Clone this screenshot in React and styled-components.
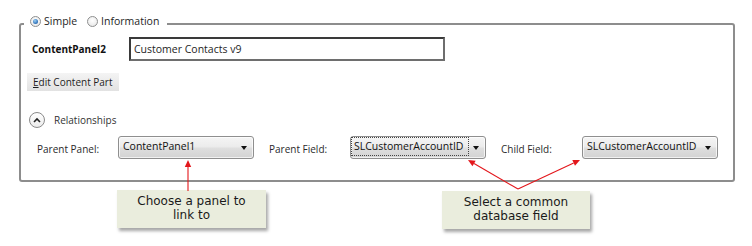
import React from "react";
import styled, { createGlobalStyle } from "styled-components";

const Global = createGlobalStyle`
  html, body { margin: 0; padding: 0; background: #fff; }
  body {
    font-family: "Open Sans", "Segoe UI", sans-serif;
    font-size: 10px;
    color: #1e1e1e;
  }
`;

const Page = styled.div`
  position: relative;
  width: 752px;
  height: 246px;
  box-sizing: border-box;
  padding-top: 13px;
  overflow: hidden;
`;

const Group = styled.fieldset`
  margin: 0 17px 0 19px;
  padding: 2px 0 21px 6px;
  border: 2px solid #8d8d8d;
  border-radius: 3px;
  min-width: 0;
`;

const Legend = styled.legend`
  margin-left: -3px;
  padding: 0 8px 6px 6px;
  display: flex;
  align-items: center;
  height: 16px;
  line-height: 16px;
  font-size: 10.5px;
`;

const RadioOption = styled.label`
  display: inline-flex;
  align-items: center;
  gap: 3px;
  margin-right: ${(p) => p.$gap || 0}px;
`;

const RadioDot = styled.span`
  width: 11px;
  height: 11px;
  border-radius: 50%;
  box-sizing: border-box;
  border: 1px solid #8e8f8f;
  background: radial-gradient(circle at 50% 40%, #ffffff 0%, #ececec 70%, #d6d6d6 100%);
  display: inline-flex;
  align-items: center;
  justify-content: center;
  &::after {
    content: "";
    width: 5px;
    height: 5px;
    border-radius: 50%;
    display: ${(p) => (p.$checked ? "block" : "none")};
    background: radial-gradient(circle at 40% 35%, #9cd0f4 0%, #3a7bc0 60%, #1f4f8a 100%);
  }
`;

const Body = styled.div`
  display: flex;
  flex-direction: column;
  align-items: flex-start;
`;

const NameRow = styled.div`
  display: flex;
  align-items: center;
  padding-left: 5px;
  height: 24px;
`;

const NameLabel = styled.span`
  width: 97px;
  font-weight: 700;
  color: #111;
`;

const NameInput = styled.input`
  width: 316px;
  height: 24px;
  box-sizing: border-box;
  border: 2px solid;
  border-color: #3a3a3a #6e6e6e #6e6e6e #3a3a3a;
  padding: 0 3px;
  font: inherit;
  font-size: 10.5px;
  color: #1e1e1e;
  background: #fff;
  outline: none;
`;

const EditButton = styled.button`
  margin-top: 12px;
  height: 18px;
  padding: 0 6px;
  border: none;
  background: linear-gradient(#f4f4f4, #e2e2e2);
  font: inherit;
  color: #1e1e1e;
  line-height: 18px;
  u { text-decoration: underline; }
`;

const Expander = styled.div`
  margin-top: 21px;
  margin-left: 2px;
  display: flex;
  align-items: center;
  gap: 9px;
  height: 16px;
  color: #333;
`;

const ExpandIcon = styled.span`
  width: 16px;
  height: 16px;
  box-sizing: border-box;
  border-radius: 50%;
  border: 1px solid #8a8a8a;
  background: linear-gradient(#ffffff, #ececec);
  display: inline-flex;
  align-items: center;
  justify-content: center;
`;

const FieldsRow = styled.div`
  margin-top: 8px;
  padding-left: 10px;
  display: flex;
  align-items: center;
  gap: 15px;
`;

const Field = styled.div`
  display: flex;
  align-items: center;
`;

const FieldLabel = styled.span`
  width: ${(p) => p.$w}px;
  color: #2a2a2a;
  padding-top: 2px;
`;

const Combo = styled.div`
  width: 136px;
  height: 23px;
  box-sizing: border-box;
  border: 1px solid #8f8f8f;
  border-radius: 3px;
  background: linear-gradient(#f5f5f5 0%, #ececec 45%, #dedede 55%, #d3d3d3 100%);
  box-shadow: inset 0 0 0 1px rgba(255, 255, 255, 0.7);
  display: flex;
  align-items: center;
  padding: 0 6px 2px 4px;
  color: #111;
  font-size: 10.5px;
`;

const ComboText = styled.span`
  flex: 1;
  height: 17px;
  line-height: 17px;
  padding-left: ${(p) => (p.$focus ? 2 : 0)}px;
  margin-left: ${(p) => (p.$focus ? -3 : 0)}px;
  margin-right: ${(p) => (p.$focus ? 5 : 0)}px;
  outline: ${(p) => (p.$focus ? "1px dotted #444" : "none")};
  white-space: nowrap;
`;

const Caret = styled.span`
  width: 0;
  height: 0;
  border-left: 3.5px solid transparent;
  border-right: 3.5px solid transparent;
  border-top: 4px solid #111;
  margin-top: 3px;
`;

const Callouts = styled.div`
  display: flex;
  align-items: flex-start;
  padding-left: 117px;
  margin-top: 8px;
  gap: 176px;
`;

const Callout = styled.div`
  width: ${(p) => p.$w}px;
  height: 38px;
  box-sizing: border-box;
  margin-top: ${(p) => p.$dy || 0}px;
  padding-top: 5px;
  background: #eaeddd;
  box-shadow: 2px 3px 3px rgba(0, 0, 0, 0.35);
  font-family: "DejaVu Sans", Verdana, sans-serif;
  font-size: 12px;
  line-height: 13.5px;
  color: #1a1a1a;
  text-align: center;
`;

const ArrowLayer = styled.svg`
  position: absolute;
  left: 0;
  top: 0;
  pointer-events: none;
`;

function Arrow({ x1, y1, x2, y2 }) {
  const dx = x2 - x1;
  const dy = y2 - y1;
  const len = Math.hypot(dx, dy);
  const ux = dx / len;
  const uy = dy / len;
  const hl = 7;
  const hw = 3.2;
  const bx = x2 - ux * hl;
  const by = y2 - uy * hl;
  const px = -uy * hw;
  const py = ux * hw;
  return (
    <g>
      <line x1={x1} y1={y1} x2={bx} y2={by} stroke="#e3161b" strokeWidth="1.1" />
      <polygon
        points={`${x2},${y2} ${bx + px},${by + py} ${bx - px},${by - py}`}
        fill="#e3161b"
      />
    </g>
  );
}

function Chevron() {
  return (
    <svg width="8" height="6" viewBox="0 0 8 6">
      <path d="M1 5 L4 2 L7 5" fill="none" stroke="#222" strokeWidth="1.6" />
    </svg>
  );
}

export default function App() {
  return (
    <Page>
      <Global />
      <Group>
        <Legend>
          <RadioOption $gap={10}>
            <RadioDot $checked />
            Simple
          </RadioOption>
          <RadioOption>
            <RadioDot />
            Information
          </RadioOption>
        </Legend>
        <Body>
          <NameRow>
            <NameLabel>ContentPanel2</NameLabel>
            <NameInput readOnly value="Customer Contacts v9" />
          </NameRow>
          <EditButton>
            <u>E</u>dit Content Part
          </EditButton>
          <Expander>
            <ExpandIcon>
              <Chevron />
            </ExpandIcon>
            Relationships
          </Expander>
          <FieldsRow>
            <Field>
              <FieldLabel $w={81}>Parent Panel:</FieldLabel>
              <Combo>
                <ComboText>ContentPanel1</ComboText>
                <Caret />
              </Combo>
            </Field>
            <Field>
              <FieldLabel $w={81}>Parent Field:</FieldLabel>
              <Combo>
                <ComboText $focus>SLCustomerAccountID</ComboText>
                <Caret />
              </Combo>
            </Field>
            <Field>
              <FieldLabel $w={81}>Child Field:</FieldLabel>
              <Combo>
                <ComboText>SLCustomerAccountID</ComboText>
                <Caret />
              </Combo>
            </Field>
          </FieldsRow>
        </Body>
      </Group>
      <Callouts>
        <Callout $w={149}>
          Choose a panel to
          <br />
          link to
        </Callout>
        <Callout $w={148} $dy={1}>
          Select a common
          <br />
          database field
        </Callout>
      </Callouts>
      <ArrowLayer width="752" height="246" viewBox="0 0 752 246">
        <Arrow x1={188} y1={191} x2={188} y2={160} />
        <Arrow x1={518} y1={189} x2={468} y2={160} />
        <Arrow x1={518} y1={189} x2={580} y2={160} />
      </ArrowLayer>
    </Page>
  );
}
